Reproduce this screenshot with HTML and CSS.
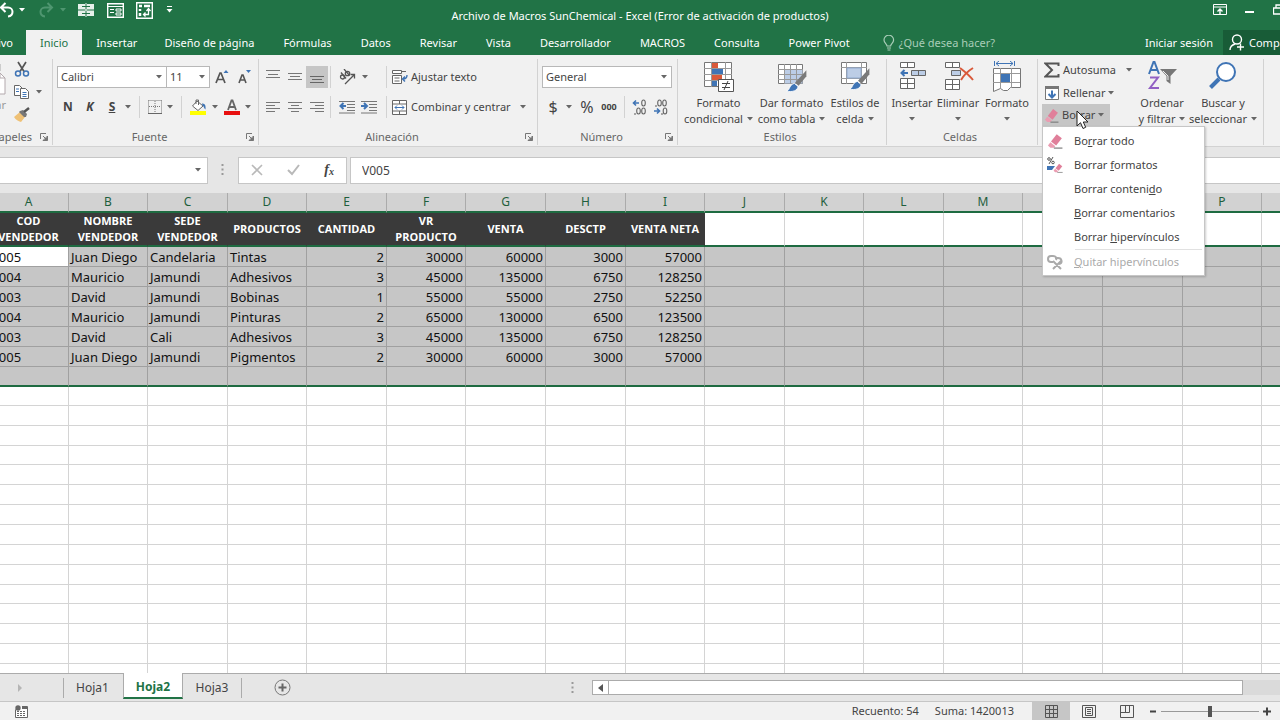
FILE: index.html
```html
<!DOCTYPE html>
<html lang="es">
<head>
<meta charset="utf-8">
<title>Archivo de Macros SunChemical - Excel</title>
<link rel="stylesheet" href="styles.css">
</head>
<body>
<svg class="defs" aria-hidden="true">
  <symbol id="caret" viewBox="0 0 6 4"><path d="M0 0h6L3 3.6z" fill="currentColor"/></symbol>
  <symbol id="launch" viewBox="0 0 8 8"><path d="M.5 6V.5H6M3 3l3 3M7.5 3v4.500H3z" fill="none" stroke="#777"/><path d="M7.500 3.500v4h-4z" fill="#777"/></symbol>
  <symbol id="eraser" viewBox="0 0 14 14"><path d="M8.500 1 13 4.500 8 11l-4.500-3.500z" fill="#e07f9a"/><path d="M3 8.200 7.300 11.500 6 13H3L.8 11z" fill="#eb9db2"/><path d="M6 13.200h7.500" stroke="#777"/></symbol>
  <symbol id="brush" viewBox="0 0 20 20"><path d="M19.500 1v5l-6.500 8-3-2.500z" fill="#7a7a7a"/><path d="m9.500 12 3 2.500c0 3.500-5 5-9.500 4 3-1 2-5.500 6.500-6.500z" fill="#3f74b5" stroke="#fff" stroke-width=".7"/></symbol>
</svg>

<header class="titlebar">
  <div class="quick">
    <button class="ib" aria-label="Deshacer"><svg width="17" height="16" viewBox="0 0 17 16"><path d="M5.500 1 1 5.500 5.500 10M1.500 5.500H8c6 0 6 8.500 0 9" fill="none" stroke="#fff" stroke-width="2"/></svg></button>
    <svg class="caret white"><use href="#caret"/></svg>
    <button class="ib redo" aria-label="Rehacer"><svg width="17" height="16" viewBox="0 0 17 16"><path d="M9.500 1 14 5.500 9.500 10M13.500 5.500H7c-6 0-6 8.500 0 9" fill="none" stroke="#4f9670" stroke-width="2"/></svg></button>
    <svg class="caret dim"><use href="#caret"/></svg>
    <button class="ib q1" aria-label="Dividir"><svg width="16" height="14" viewBox="0 0 16 14"><path d="M0 1h7v5H0zM9 1h7v5H9zM0 8h7v5H0zM9 8h7v5H9z" fill="#e6f0ea"/><path d="M8 0v14M0 7h16" stroke="#e6f0ea"/><path d="M4 3.500h8M4 10.500h8" stroke="#217346"/></svg></button>
    <button class="ib q2" aria-label="Formulario"><svg width="17" height="15" viewBox="0 0 17 15"><path d="M.7.7h15.600v13.600H.7z" fill="none" stroke="#fff" stroke-width="1.400"/><path d="M1 3.500h15M3 6.500h4M3 9.500h4" stroke="#fff"/><path d="M9 6h5v2H9zM9 10h5v2H9z" fill="none" stroke="#fff"/></svg></button>
    <button class="ib q3" aria-label="Tabla dinámica"><svg width="17" height="17" viewBox="0 0 17 17"><path d="M.7.700h15.600v15.600H.7z" fill="none" stroke="#fff" stroke-width="1.400"/><path d="M3 4h3M8 4h6M4 7v2M4 11v3" stroke="#fff" stroke-width="2.500"/><path d="M8 12.500h4.500V7M10.500 9l2-2.500 2 2.500M9.500 10.500l-2 2 2 2" fill="none" stroke="#fff" stroke-width="1.300"/></svg></button>
    <button class="ib q4" aria-label="Personalizar"><svg width="7" height="8" viewBox="0 0 7 8"><path d="M1 .500h5" stroke="#fff"/><path d="M.5 3h6l-3 3.500z" fill="#fff"/></svg></button>
  </div>
  <div class="doc-title">Archivo de Macros SunChemical - Excel (Error de activación de productos)</div>
  <div class="winbtns">
    <button class="ib" aria-label="Opciones de la cinta"><svg width="14" height="12" viewBox="0 0 14 12"><path d="M.5.500h13v10H.5zM.5 3h13" fill="none" stroke="#fff"/><path d="M7 10V5M4.500 7.500 7 5l2.500 2.500" fill="none" stroke="#fff" stroke-width="1.400"/></svg></button>
    <button class="ib" aria-label="Minimizar"><svg width="10" height="12" viewBox="0 0 10 12"><path d="M0 8h9" stroke="#fff" stroke-width="2"/></svg></button>
    <button class="ib" aria-label="Restaurar"><svg width="12" height="12" viewBox="0 0 12 12"><path d="M3 3.500V1h8v6H9M.5 4h8v6h-8z" fill="none" stroke="#fff" stroke-width="1.300"/></svg></button>
  </div>
</header>

<nav class="tabs">
  <button class="tab file">Archivo</button>
  <button class="tab active">Inicio</button>
  <button class="tab">Insertar</button>
  <button class="tab">Diseño de página</button>
  <button class="tab">Fórmulas</button>
  <button class="tab">Datos</button>
  <button class="tab">Revisar</button>
  <button class="tab">Vista</button>
  <button class="tab">Desarrollador</button>
  <button class="tab">MACROS</button>
  <button class="tab">Consulta</button>
  <button class="tab">Power Pivot</button>
  <button class="tab tell"><svg width="12" height="16" viewBox="0 0 12 16"><path d="M4 11c0-2-3-3-3-6a4.800 4.800 0 0 1 9.600 0c0 3-3 4-3 6zM4 13h4M4.500 15h3" fill="none" stroke="#a9cdb8" stroke-width="1.200"/></svg>¿Qué desea hacer?</button>
  <button class="tab signin">Iniciar sesión</button>
  <button class="share"><svg width="16" height="17" viewBox="0 0 16 17"><circle cx="8" cy="5.500" r="4.500" fill="none" stroke="#fff" stroke-width="1.400"/><path d="M1 16c0-3 2-5 5-6M11.500 9.500v7M8 13h7" fill="none" stroke="#fff" stroke-width="1.400"/></svg>Compartir</button>
</nav>

<section class="ribbon">
  <div class="group clip">
    <div class="body clipbody">
      <button class="paste"><svg width="16" height="32" viewBox="0 0 16 32"><path d="M0 1h10v6" fill="none" stroke="#ccc" stroke-width="2"/><path d="M1 9h9l5 5v16H1z" fill="#fff" stroke="#b3a9ad"/><path d="M10 9v5h5" fill="none" stroke="#b3a9ad"/></svg><span>Pegar</span></button>
      <div class="stack">
        <button class="ib" aria-label="Cortar"><svg width="16" height="16" viewBox="0 0 16 16"><path d="m4 1 6 9.500M12 1 6 10.500" stroke="#555" stroke-width="1.700"/><circle cx="4" cy="12.500" r="2.500" fill="none" stroke="#3f74b5" stroke-width="1.500"/><circle cx="12" cy="12.500" r="2.500" fill="none" stroke="#3f74b5" stroke-width="1.500"/></svg></button>
        <button class="ib copy" aria-label="Copiar"><svg width="16" height="16" viewBox="0 0 16 16"><path d="M.5 1.500h5l3 3v7h-8z" fill="#fff" stroke="#666"/><path d="M6.500 4.500h5l3 3v7h-8z" fill="#fff" stroke="#666"/><path d="M2 5h3M2 7.500h3M8.500 8.500h4M8.500 10.500h4M8.500 12.500h4" stroke="#3f74b5"/></svg></button>
        <svg class="caret"><use href="#caret"/></svg>
        <button class="ib" aria-label="Copiar formato"><svg width="17" height="16" viewBox="0 0 17 16"><path d="m0 10 6-5 5 5-4 5c-3-1-5-2-7-5z" fill="#efc176"/><path d="m6 4 3-1 4 4-1 3-2 0-5-5z" fill="#777"/><path d="m10 5 5-4" stroke="#555" stroke-width="2.500"/></svg></button>
      </div>
    </div>
    <div class="label"><span>Portapapeles</span><button class="ib" aria-label="Más"><svg class="launch"><use href="#launch"/></svg></button></div>
  </div>

  <div class="group fuente">
    <div class="body rows">
      <div class="row">
        <div class="combo font"><select aria-label="Fuente"><option>Calibri</option></select><svg class="caret"><use href="#caret"/></svg></div>
        <div class="combo size"><select aria-label="Tamaño"><option>11</option></select><svg class="caret"><use href="#caret"/></svg></div>
        <button class="ib grow" aria-label="Aumentar"><svg width="14" height="16" viewBox="0 0 14 16"><path d="m1 14 4-10h1l4 10M2.500 10.500h6" fill="none" stroke="#555" stroke-width="1.700"/><path d="M8.500 4h5L11 1z" fill="#3f74b5"/></svg></button>
        <button class="ib grow" aria-label="Disminuir"><svg width="14" height="16" viewBox="0 0 14 16"><path d="m1 14 3-8h1l3 8M2 11h5" fill="none" stroke="#555" stroke-width="1.600"/><path d="M8 1h5l-2.500 3z" fill="#3f74b5"/></svg></button>
      </div>
      <div class="row">
        <button class="ib fmt bold">N</button>
        <button class="ib fmt ital">K</button>
        <button class="ib fmt under">S</button>
        <svg class="caret"><use href="#caret"/></svg>
        <i class="sep"></i>
        <button class="ib" aria-label="Bordes"><svg width="14" height="14" viewBox="0 0 14 14"><path d="M.5.500h13M.5.500v13M13.500.500v13M7 1v12M1 6.500h12" fill="none" stroke="#777" stroke-dasharray="1 1"/><path d="M0 13.500h14" stroke="#666"/></svg></button>
        <svg class="caret"><use href="#caret"/></svg>
        <i class="sep"></i>
        <button class="ib" aria-label="Color de relleno"><svg width="17" height="16" viewBox="0 0 17 16"><path d="M0 12h16v4H0z" fill="#ff0"/><path d="m7 2 6 5-5 4.500L2.500 7z" fill="#fff" stroke="#666"/><path d="M6 5V1h2.500v5" fill="none" stroke="#666"/><path d="M12 4.500c3 0 4 2 3.500 6-2-1-1-3-3-4z" fill="#3f74b5"/></svg></button>
        <svg class="caret"><use href="#caret"/></svg>
        <button class="ib" aria-label="Color de fuente"><svg width="16" height="16" viewBox="0 0 16 16"><path d="M0 12h16v4H0z" fill="#e81010"/><path d="m4 11 3.500-9.500h1L12 11M5 8h6" fill="none" stroke="#666" stroke-width="1.800"/></svg></button>
        <svg class="caret"><use href="#caret"/></svg>
      </div>
    </div>
    <div class="label"><span>Fuente</span><button class="ib" aria-label="Más"><svg class="launch"><use href="#launch"/></svg></button></div>
  </div>

  <div class="group alinea">
    <div class="body cols">
      <div class="rows sub">
        <div class="row al">
          <button class="ib" aria-label="Alinear arriba"><svg width="14" height="16" viewBox="0 0 14 16"><path d="M0 1.500h14M2 5.500h10M0 8.500h14" stroke="#777"/></svg></button>
          <button class="ib" aria-label="Alinear en medio"><svg width="14" height="16" viewBox="0 0 14 16"><path d="M0 4.500h14M2 7.500h10M0 10.500h14" stroke="#777"/></svg></button>
          <button class="ib on" aria-label="Alinear abajo"><svg width="14" height="16" viewBox="0 0 14 16"><path d="M0 7.500h14M2 10.500h10M0 13.500h14" stroke="#666"/></svg></button>
        </div>
        <div class="row al">
          <button class="ib" aria-label="Izquierda"><svg width="14" height="12" viewBox="0 0 14 12"><path d="M0 1.500h14M0 4.500h9M0 7.500h14M0 10.500h9" stroke="#777"/></svg></button>
          <button class="ib" aria-label="Centrar"><svg width="14" height="12" viewBox="0 0 14 12"><path d="M0 1.500h14M3 4.500h8M0 7.500h14M3 10.500h8" stroke="#777"/></svg></button>
          <button class="ib" aria-label="Derecha"><svg width="14" height="12" viewBox="0 0 14 12"><path d="M0 1.500h14M5 4.500h9M0 7.500h14M5 10.500h9" stroke="#777"/></svg></button>
        </div>
      </div>
      <div class="rows sub indent">
        <div class="row">
          <button class="ib" aria-label="Orientación"><svg width="17" height="16" viewBox="0 0 17 16"><g fill="none" stroke="#555" stroke-width="1.300"><circle cx="3.500" cy="8" r="2"/><path d="m2 3.500 5 6"/><circle cx="8.500" cy="4.500" r="2.200"/><path d="m5 0 5.500 6.500M6 15l9-9M11.500 5.500h4v4"/></g></svg></button>
          <svg class="caret"><use href="#caret"/></svg>
        </div>
        <div class="row">
          <button class="ib" aria-label="Disminuir sangría"><svg width="16" height="14" viewBox="0 0 16 14"><path d="M0 1.500h16M8 4.500h8M8 7.500h8M8 10.500h8M0 13h16" stroke="#777"/><path d="M7 6H2M4.500 3 1.500 6l3 3" fill="none" stroke="#3f74b5" stroke-width="2"/></svg></button>
          <button class="ib" aria-label="Aumentar sangría"><svg width="16" height="14" viewBox="0 0 16 14"><path d="M0 1.500h16M8 4.500h8M8 7.500h8M8 10.500h8M0 13h16" stroke="#777"/><path d="M0 6h5M3 3l3 3-3 3" fill="none" stroke="#3f74b5" stroke-width="2"/></svg></button>
        </div>
      </div>
      <div class="rows sub wrap">
        <div class="row"><button class="tb"><svg width="16" height="16" viewBox="0 0 16 16"><path d="M.5 1.500h9v3h-9zM.5 6.500h9v8h-9z" fill="#fff" stroke="#666"/><path d="M2.500 9h5M2.500 12h5M10 2.500h4" stroke="#666"/><path d="M15 6c0 3-1 4-4 4M13 7.500 10.500 10l2.500 2.500" fill="none" stroke="#3f74b5" stroke-width="1.400"/></svg>Ajustar texto</button></div>
        <div class="row"><button class="tb"><svg width="16" height="15" viewBox="0 0 16 15"><path d="M.5.500h14v14H.5zM.5 4h14M.5 11h14M7.500.500V4M7.500 11v3.500" fill="#fff" stroke="#666"/><path d="M3 7.500h9M5 5.500l-2 2 2 2M10 5.500l2 2-2 2" fill="none" stroke="#3f74b5"/></svg>Combinar y centrar</button><svg class="caret gap"><use href="#caret"/></svg></div>
      </div>
    </div>
    <div class="label"><span>Alineación</span><button class="ib" aria-label="Más"><svg class="launch"><use href="#launch"/></svg></button></div>
  </div>

  <div class="group numero">
    <div class="body rows">
      <div class="row"><div class="combo num"><select aria-label="Formato de número"><option>General</option></select><svg class="caret"><use href="#caret"/></svg></div></div>
      <div class="row nrow">
        <button class="ib cur">$</button><svg class="caret"><use href="#caret"/></svg>
        <button class="ib pct">%</button><button class="ib mil">000</button><i class="sep"></i>
        <button class="ib dec" aria-label="Aumentar decimales"><svg width="16" height="16" viewBox="0 0 16 16"><path d="M7 4H2M4 1.500 1.500 4 4 6.500" fill="none" stroke="#3f74b5" stroke-width="1.600"/><g fill="none" stroke="#666" stroke-width="1.100"><ellipse cx="11.500" cy="4" rx="1.800" ry="3"/><ellipse cx="6.500" cy="12" rx="1.800" ry="3"/><ellipse cx="11.500" cy="12" rx="1.800" ry="3"/><path d="M3 14v2"/></g></svg></button>
        <button class="ib dec" aria-label="Disminuir decimales"><svg width="16" height="16" viewBox="0 0 16 16"><path d="M1 12h5M4 9.500 6.500 12 4 14.500" fill="none" stroke="#3f74b5" stroke-width="1.600"/><g fill="none" stroke="#666" stroke-width="1.100"><ellipse cx="6.500" cy="4" rx="1.800" ry="3"/><ellipse cx="11.500" cy="4" rx="1.800" ry="3"/><ellipse cx="12" cy="12" rx="1.800" ry="3"/><path d="M3 6v2M9 14v2"/></g></svg></button>
      </div>
    </div>
    <div class="label"><span>Número</span><button class="ib" aria-label="Más"><svg class="launch"><use href="#launch"/></svg></button></div>
  </div>

  <div class="group estilos">
    <div class="body bigs">
      <button class="big"><svg width="32" height="32" viewBox="0 0 32 32"><path d="M1.500 1.500h27v24h-27z" fill="#fff" stroke="#777"/><path d="M1 7.500h28M1 13.500h28M1 19.500h28M8.500 1v25M22.500 1v25" stroke="#999"/><path d="M9 2h6v5H9zM9 14h10v5H9z" fill="#d9593a"/><path d="M9 8h11v5H9zM9 20h5v5H9z" fill="#3f74b5"/><path d="M15.500 18.500h15v12h-15z" fill="#fff" stroke="#555"/><path d="M19 22.500h8M19 26.500h8M25 20l-4 9" stroke="#444"/></svg><span>Formato</span><span>condicional <svg class="caret"><use href="#caret"/></svg></span></button>
      <button class="big"><svg width="32" height="32" viewBox="0 0 32 32"><path d="M2.500 3.500h24v19h-24z" fill="#fff" stroke="#777"/><path d="M8.500 8.500h18v14h-18z" fill="#bccde6"/><path d="M2 8.500h25M2 13.500h25M2 18.500h25M8.500 3v20M14.500 3v20M20.500 3v20" stroke="#999"/><use href="#brush" x="7" y="8" width="24" height="24"/></svg><span>Dar formato</span><span>como tabla <svg class="caret"><use href="#caret"/></svg></span></button>
      <button class="big"><svg width="32" height="32" viewBox="0 0 32 32"><path d="M2.500 1.500h25v21h-25z" fill="#fff" stroke="#777"/><path d="M2 6.500h26M2 17.500h26M7.500 1v22M22.500 1v22" stroke="#999"/><path d="M8 7h14v10H8z" fill="#bccde6" stroke="#8fa9cf"/><use href="#brush" x="7" y="6" width="24" height="24"/></svg><span>Estilos de</span><span>celda <svg class="caret"><use href="#caret"/></svg></span></button>
    </div>
    <div class="label"><span>Estilos</span></div>
  </div>

  <div class="group celdas">
    <div class="body bigs">
      <button class="big"><svg width="32" height="32" viewBox="0 0 32 32"><path d="M4.500 1.500h14v5h-14zM11.500 1.500v5M4.500 17.500h14v10h-14zM4.500 22.500h14M11.500 17.500v10" fill="#fff" stroke="#666"/><path d="M15.500 9.500h14v5h-14zM22.500 9.500v5" fill="#bccde6" stroke="#666"/><path d="M12 12H6M8.500 9l-3 3 3 3" fill="none" stroke="#3f74b5" stroke-width="2"/></svg><span>Insertar</span><svg class="caret"><use href="#caret"/></svg></button>
      <button class="big"><svg width="32" height="32" viewBox="0 0 32 32"><path d="M3.500 1.500h14v5h-14zM10.500 1.500v5M3.500 18.500h14v10h-14zM3.500 23.500h14M10.500 18.500v10" fill="#fff" stroke="#666"/><path d="M9.500 9.500h9v5h-9z" fill="#bccde6" stroke="#666"/><path d="M18 7c4 3 9 7 13 12M31 7c-5 3-9 7-12 12" fill="none" stroke="#d9593a" stroke-width="2"/></svg><span>Eliminar</span><svg class="caret"><use href="#caret"/></svg></button>
      <button class="big"><svg width="32" height="32" viewBox="0 0 32 32"><path d="M3.500 0v5M23.500 0v5M5 2.500h17M8 0 5 2.500 8 5M19 0l3 2.500L19 5" fill="none" stroke="#3f74b5"/><path d="M2.500 7.500h27v19h-10l-3 3h-4l-3-2-7 3z" fill="#fff" stroke="#777"/><path d="M2 12.500h27M2 21.500h27M9.500 7v20M20.500 7v20" stroke="#999"/><path d="M10 13h9v8h-9z" fill="#3f74b5"/></svg><span>Formato</span><svg class="caret"><use href="#caret"/></svg></button>
    </div>
    <div class="label"><span>Celdas</span></div>
  </div>

  <div class="group modificar">
    <div class="body cols">
      <div class="edit">
        <button class="tb wide"><svg width="16" height="16" viewBox="0 0 16 16"><path d="M14.500 4V1.500h-13L8 8l-6.500 6.500h13V12" fill="none" stroke="#555" stroke-width="2"/></svg>Autosuma<svg class="caret"><use href="#caret"/></svg></button>
        <button class="tb"><svg width="16" height="16" viewBox="0 0 16 16"><path d="M1.500 1.500h13v13h-13z" fill="#fff" stroke="#777"/><path d="M1 1h14v3H1z" fill="#777"/><path d="M8 5.500v7M4.500 9 8 12.500 11.500 9" fill="none" stroke="#3f74b5" stroke-width="2"/></svg>Rellenar<svg class="caret"><use href="#caret"/></svg></button>
        <div class="drop">
          <button class="tb open"><svg width="15" height="15"><use href="#eraser"/></svg>Borrar<svg class="caret"><use href="#caret"/></svg></button>
          <svg class="pointer" width="14" height="20" viewBox="0 0 14 20"><path d="M1 1v15l3.500-3.300L7 18.500l2.700-1.200L7.300 12H12z" fill="#fff" stroke="#222"/></svg>
          <div class="menu" role="menu">
            <button role="menuitem"><svg width="16" height="16"><use href="#eraser"/></svg><span>Bo<u>r</u>rar todo</span></button>
            <button role="menuitem"><svg width="16" height="16" viewBox="0 0 16 16"><g fill="none" stroke="#555"><circle cx="2" cy="2" r="1.300"/><circle cx="6" cy="5.500" r="1.300"/><path d="M6 0 2 7"/></g><path d="M0 9h8l-3 4H0z" fill="#3f74b5"/><use href="#eraser" x="6" y="6" width="10" height="10"/></svg><span>Borrar <u>f</u>ormatos</span></button>
            <button role="menuitem"><i></i><span>Borrar conteni<u>d</u>o</span></button>
            <button role="menuitem"><i></i><span><u>B</u>orrar comentarios</span></button>
            <button role="menuitem"><i></i><span>Borrar <u>h</u>ipervínculos</span></button>
            <hr>
            <button role="menuitem" disabled><svg width="16" height="16" viewBox="0 0 16 16"><g fill="none" stroke="#aaa" stroke-width="2"><path d="M6 8H4C0 8 0 2 4 2h2c3 0 4 2 3 4M8 4h3c4 0 5 5 1 6M6 7l8 8M14 7l-8 8"/></g></svg><span><u>Q</u>uitar hipervínculos</span></button>
          </div>
        </div>
      </div>
      <button class="big sort"><svg width="32" height="32" viewBox="0 0 32 32"><path d="m3 13 4.500-12h1L13 13M4.500 9h7" fill="none" stroke="#3f74b5" stroke-width="2"/><path d="M4 16.500h8L4 27h9" fill="none" stroke="#9160c4" stroke-width="2"/><path d="M14 8h17l-6.500 7v8l-4-3v-5z" fill="#777"/><path d="m17 10 5 5v4" fill="none" stroke="#eee"/></svg><span>Ordenar</span><span>y filtrar <svg class="caret"><use href="#caret"/></svg></span></button>
      <button class="big find"><svg width="32" height="32" viewBox="0 0 32 32"><circle cx="19" cy="11" r="9" fill="#fff" stroke="#3f74b5" stroke-width="2"/><path d="M12 18 3.500 26.500" stroke="#3f74b5" stroke-width="4"/></svg><span>Buscar y</span><span>seleccionar <svg class="caret"><use href="#caret"/></svg></span></button>
    </div>
    <div class="label"></div>
  </div>
</section>

<section class="formula">
  <div class="namebox"><input aria-label="Cuadro de nombres"><svg class="caret"><use href="#caret"/></svg></div>
  <svg class="grip" width="3" height="12" viewBox="0 0 3 12"><path d="M.5 1h2M.5 5.500h2M.5 10h2" stroke="#999" stroke-width="2"/></svg>
  <div class="fx">
    <button class="ib" aria-label="Cancelar"><svg width="12" height="12" viewBox="0 0 12 12"><path d="m1 1 10 10M11 1 1 11" stroke="#b9b9b9" stroke-width="1.600"/></svg></button>
    <button class="ib" aria-label="Introducir"><svg width="13" height="12" viewBox="0 0 13 12"><path d="m1 6 4 4 7-9" fill="none" stroke="#b9b9b9" stroke-width="2"/></svg></button>
    <button class="ib fxb">f<small>x</small></button>
  </div>
  <input class="entry" aria-label="Barra de fórmulas" value="V005">
</section>

<main class="sheet"><table id="grid"></table></main>

<footer>
  <div class="sheets">
    <svg class="nav" width="5" height="8" viewBox="0 0 5 8"><path d="M0 0v8l4-4z" fill="#b5b5b5"/></svg>
    <button class="stab first">Hoja1</button>
    <button class="stab cur2">Hoja2</button>
    <button class="stab last">Hoja3</button>
    <button class="ib add" aria-label="Hoja nueva"><svg width="17" height="17" viewBox="0 0 17 17"><circle cx="8.500" cy="8.500" r="7.500" fill="none" stroke="#777"/><path d="M8.500 4.500v8M4.500 8.500h8" stroke="#666" stroke-width="2"/></svg></button>
    <svg class="grip" width="3" height="12" viewBox="0 0 3 12"><path d="M.5 1h2M.5 5.500h2M.5 10h2" stroke="#999" stroke-width="2"/></svg>
    <div class="hscroll"><button class="ib" aria-label="Desplazar"><svg width="5" height="8" viewBox="0 0 5 8"><path d="M5 0v8L0 4z" fill="#555"/></svg></button><div class="thumb"></div></div>
  </div>
  <div class="status">
    <svg class="rec" width="13" height="13" viewBox="0 0 13 13"><path d="M.5 4.500V12.500h12V1.500H7" fill="#fff" stroke="#666"/><path d="M7 2h5v2H7z" fill="#666"/><path d="M2 6.500h9M2 8.500h9M2 10.500h9" stroke="#666" stroke-dasharray="2 1"/><circle cx="3" cy="3" r="2.700" fill="#666"/></svg>
    <span class="count">Recuento: 54</span>
    <span class="sum">Suma: 1420013</span>
    <button class="view sel" aria-label="Normal"><svg width="13" height="13" viewBox="0 0 13 13"><path d="M.5.500h12v12H.5zM.5 4.500h12M.5 8.500h12M4.500.500v12M8.500.500v12" fill="none" stroke="#555"/></svg></button>
    <button class="view" aria-label="Diseño de página"><svg width="14" height="13" viewBox="0 0 14 13"><path d="M.5.500h13v12H.5zM3.500 2.500h7v8h-7zM5 4.500h4M5 6.500h4M5 8.500h4" fill="none" stroke="#555"/></svg></button>
    <button class="view" aria-label="Salto de página"><svg width="14" height="13" viewBox="0 0 14 13"><path d="M.5.500h13v12H.5zM5.500.500v7M9.500.500v7M.5 7.500h9" fill="none" stroke="#555"/></svg></button>
    <button class="ib zoomb" aria-label="Alejar"><svg width="7" height="9" viewBox="0 0 7 9"><path d="M0 4.500h6" stroke="#444" stroke-width="2"/></svg></button>
    <input class="slider" type="range" aria-label="Zoom" min="0" max="100" value="50">
    <button class="ib zoomb" aria-label="Acercar"><svg width="9" height="9" viewBox="0 0 9 9"><path d="M0 4.500h8M4 .500v8" stroke="#444" stroke-width="2"/></svg></button>
  </div>
</footer>
<script src="sheet.js"></script>
</body>
</html>
```
FILE: styles.css
```css
* { box-sizing: border-box; }
body { margin: 0; height: 100vh; display: flex; flex-direction: column; overflow: hidden; background: #e6e6e6; color: #444; font: 11px/16px "Noto Sans", "Open Sans", sans-serif; }
button, input, select { font: inherit; color: inherit; margin: 0; padding: 0; border: 0; background: none; border-radius: 0; }
svg { display: block; flex: none; }
.defs { position: absolute; width: 0; height: 0; }
.caret { width: 6px; height: 4px; color: #666; flex: none; }
.caret.white { color: #fff; }
.caret.dim { color: #4f9670; }
.launch { width: 8px; height: 8px; }
.ib { display: flex; align-items: center; justify-content: center; flex: none; }
.sep { width: 1px; height: 22px; background: #d2d2d2; flex: none; }

.titlebar { display: grid; grid-template-columns: 1fr auto 1fr; align-items: center; height: 30px; background: #217346; color: #fff; flex: none; }
.doc-title { padding-top: 2px; }
.quick { display: flex; align-items: center; height: 20px; align-self: start; }
.quick .ib { height: 16px; }
.quick .redo { margin-left: 13px; }
.quick .dim { margin-left: 5px; }
.quick .white { margin-left: 2px; }
.quick .q1 { margin-left: 12px; }
.quick .q2, .quick .q4 { margin-left: 13px; }
.quick .q3 { margin-left: 12px; }
.winbtns { display: flex; justify-content: flex-end; align-items: center; gap: 18px; height: 20px; align-self: start; margin-right: -5px; }

.tabs { display: flex; align-items: stretch; height: 25px; background: #217346; color: #fff; flex: none; }
.tab { padding: 0 14px 0 15px; white-space: nowrap; }
.file { width: 26px; padding: 0 13px 0 0; display: flex; align-items: center; justify-content: flex-end; flex: none; }
.active { background: #f1f1f1; color: #217346; padding: 0 14px; }
.active + .tab { padding: 0 12px 0 14px; }
.tell { display: flex; align-items: center; gap: 4px; color: #a9cdb8; padding-left: 19px; }
.signin { margin-left: auto; padding: 0 10px; }
.share { display: flex; align-items: center; gap: 4px; background: #185c37; width: 57px; padding-left: 6px; flex: none; overflow: hidden; }

.ribbon { display: flex; height: 92px; background: #f1f1f1; border-bottom: 1px solid #d2d2d2; flex: none; padding-top: 4px; }
.group { display: flex; flex-direction: column; height: 86px; border-right: 1px solid #d2d2d2; flex: none; }
.body { flex: 1; min-height: 0; }
.label { display: flex; align-items: center; height: 16px; padding-right: 4px; color: #666; }
.label span { flex: 1; text-align: center; }
.clip { width: 53px; }
.fuente { width: 206px; }
.alinea { width: 279px; }
.numero { width: 140px; }
.estilos { width: 209px; }
.celdas { width: 151px; }
.modificar { width: 226px; }
.clip .label { justify-content: flex-end; gap: 8px; }
.clip .label span { flex: none; }
.clipbody { display: flex; justify-content: flex-end; }
.paste { display: flex; flex-direction: column; align-items: flex-end; width: 6px; padding-top: 5px; gap: 1px; color: #999; flex: none; }
.stack { display: grid; grid-template-columns: 16px 6px; column-gap: 6px; align-content: start; align-items: center; row-gap: 7px; padding: 2px 10px 0 8px; }
.stack > .ib { grid-column: 1; }
.rows { display: flex; flex-direction: column; gap: 8px; padding-top: 7px; }
.row { display: flex; align-items: center; height: 22px; }
.fuente .row, .numero .row { padding-left: 4px; }
.combo { display: flex; align-items: center; height: 22px; background: #fff; border: 1px solid #b8b8b8; position: relative; }
.combo select { appearance: none; width: 100%; height: 100%; padding: 0 3px; }
.combo .caret { position: absolute; right: 4px; pointer-events: none; }
.font { width: 110px; }
.size { width: 43px; border-left: 0; }
.num { width: 130px; }
.grow { width: 22px; margin-left: 1px; }
.fmt { width: 22px; font-weight: 700; font-size: 12px; }
.ital { font-style: italic; }
.under { text-decoration: underline; }
.fuente .caret { margin-left: 2px; }
.fuente .combo .caret { margin-left: 0; }
.fuente .row > .sep { margin: 0 8px; }
.fuente .sep ~ .ib ~ .caret { margin-left: 5px; }
.fuente .caret + .ib { margin-left: 6px; }
.cols { display: flex; }
.al .ib { width: 22px; height: 22px; }
.al { padding-left: 3px; }
.on { background: #c6c6c6; }
.sub + .sub { margin-left: 1px; }
.sub .row { padding-right: 2px; border-right: 1px solid #d2d2d2; }
.indent .row { width: 55px; padding-left: 7px; gap: 6px; }
.wrap .row { border-right: 0; padding-left: 4px; }
.tb { display: flex; align-items: center; gap: 3px; white-space: nowrap; }
.gap { margin-left: 9px; }
.nrow .cur, .nrow .pct { width: 22px; font-size: 16px; }
.nrow .caret { margin-left: 2px; }
.nrow .pct { margin-left: 4px; }
.nrow .mil { width: 22px; font-size: 9px; font-weight: 700; }
.nrow .sep { margin: 0 4px 0 4px; }
.nrow .dec { width: 21px; }

.bigs { display: flex; padding-left: 4px; }
.big { display: flex; flex-direction: column; align-items: center; padding-top: 2px; white-space: nowrap; flex: none; }
.big > svg:first-child { margin-bottom: 2px; }
.big > .caret { margin-top: 6px; }
.big span { display: flex; align-items: center; gap: 4px; }
.estilos .big { width: 73px; }
.estilos .big:last-child { width: 54px; }
.celdas .bigs { padding-left: 2px; }
.celdas .big { width: 46px; }
.celdas .big:last-child { width: 52px; }
.edit { display: flex; flex-direction: column; width: 99px; padding-left: 4px; }
.edit .tb { height: 22px; padding: 0 2px; color: #444; }
.edit .tb + .tb { height: 23px; }
.edit .wide { width: 92px; justify-content: flex-start; }
.edit .wide .caret { margin-left: auto; }
.drop { position: relative; width: 68px; }
.edit .open { background: #c6c6c6; width: 100%; }
.pointer { position: absolute; left: 34px; top: 6px; z-index: 3; }
.menu { position: absolute; left: 0; top: 22px; z-index: 2; width: 163px; background: #fff; border: 1px solid #c6c6c6; box-shadow: 1px 1px 2px rgba(0,0,0,.2); padding: 2px 0 1px; }
.menu button { display: grid; grid-template-columns: 16px 1fr; column-gap: 11px; align-items: center; width: 100%; height: 24px; padding: 0 4px; text-align: left; white-space: nowrap; }
.menu button:disabled { color: #aaa; }
.menu hr { margin: 0 2px 0 32px; border: 0; border-top: 1px solid #e1e1e1; }
.sort { width: 50px; }
.find { width: 72px; }

.formula { display: flex; align-items: center; height: 46px; flex: none; }
.namebox { display: flex; align-items: center; width: 208px; height: 27px; background: #fff; border: 1px solid #c6c6c6; border-left: 0; padding-right: 6px; }
.namebox input { flex: 1; min-width: 0; }
.grip { margin: 0 14px 0 13px; }
.fx { display: flex; align-items: center; justify-content: space-around; width: 109px; height: 27px; background: #fff; border: 1px solid #c6c6c6; margin-right: 3px; }
.fxb { font: italic 700 14px/18px "Liberation Serif", serif; }
.fxb small { font-size: 10px; padding-top: 4px; }
.entry { flex: 1; height: 27px; background: #fff; border: 1px solid #c6c6c6; border-right: 0; padding-left: 11px; font-size: 12px; }

.sheet { flex: 1; min-height: 0; overflow: hidden; background: #fff; }
#grid { table-layout: fixed; border-collapse: separate; border-spacing: 0; width: 1353px; margin-left: -11px; color: #111; font-size: 13px; line-height: 18px; }
#grid th, #grid td { padding: 0 2px; border: solid #d4d4d4; border-width: 0 1px 1px 0; white-space: nowrap; font-weight: 400; overflow: hidden; }
#grid .w79 { width: 79px; }
#grid .w80 { width: 80px; }
#grid .letters th { height: 20px; background: #d2d2d2; border-right-color: #ababab; border-bottom: 2px solid #1e6b41; color: #1e5f3c; font-size: 12px; line-height: 18px; }
#grid .names td { height: 34px; border-bottom: 2px solid #1e6b41; }
#grid .names .dark { background: #3a3a3a; border-right-color: #3a3a3a; color: #fff; text-align: center; font: 700 11px/16px "Open Sans", sans-serif; white-space: pre-line; padding: 0; }
#grid td { height: 20px; }
#grid .short td { height: 19px; line-height: 17px; }
#grid .picked td { background: #c6c6c6; border-color: #a0a0a0; }
#grid .picked .live { background: #fff; }
#grid .lastpick td { border-bottom: 2px solid #1e6b41; }
#grid .n { text-align: right; }

footer { flex: none; }
.sheets { display: flex; align-items: center; height: 28px; border-top: 1px solid #ababab; background: #e6e6e6; }
.nav { margin-left: 18px; }
.stab { font-size: 12px; height: 20px; padding: 0 13px; flex: none; }
.first { width: 60px; margin-left: 40px; border-left: 1px solid #ababab; padding-left: 11px; }
.cur2 { width: 60px; height: 26px; align-self: flex-start; margin-top: -1px; padding: 4px 0 0; background: #fff; border: solid #ababab; border-width: 0 1px; border-bottom: 2px solid #217346; color: #217346; font-weight: 700; }
.last { width: 59px; border-right: 1px solid #ababab; padding: 0; }
.add { margin-left: 32px; }
.sheets .grip { margin-left: auto; margin-right: 15px; }
.hscroll { display: flex; width: 54%; height: 15px; background: linear-gradient(#dadada, #dadada) right / 40px 100% no-repeat; padding-left: 3px; flex: none; }
.hscroll .ib { width: 16px; height: 15px; background: #fff; border: 1px solid #ababab; border-right: 0; }
.thumb { flex: 1; margin-right: 37px; background: #fff; border: 1px solid #ababab; }
.status { display: flex; align-items: center; height: 19px; background: #f1f1f1; border-top: 1px solid #c6c6c6; padding-right: 4px; }
.rec { margin-left: 15px; }
.count { margin-left: auto; margin-right: 16px; }
.sum { margin-right: 18px; }
.view { display: flex; align-items: center; justify-content: center; width: 38px; height: 18px; flex: none; }
.sel { background: #c6c6c6; }
.zoomb { margin-left: 4px; margin-right: 4px; }
.slider { appearance: none; width: 98px; height: 12px; background: linear-gradient(#999, #999) center / 100% 1px no-repeat; }
.slider::-webkit-slider-thumb { appearance: none; width: 4px; height: 11px; background: #555; }
```
FILE: sheet.js
```js
const widths = [80, 79, 80, 79, 80, 79, 80, 80, 79, 80, 79, 80, 79, 80, 80, 79, 80];
const names = ["COD\nVENDEDOR", "NOMBRE\nVENDEDOR", "SEDE\nVENDEDOR", "PRODUCTOS", "CANTIDAD", "VR\nPRODUCTO", "VENTA", "DESCTP", "VENTA NETA"];
const data = [
  ["V005", "Juan Diego", "Candelaria", "Tintas", 2, 30000, 60000, 3000, 57000],
  ["V004", "Mauricio", "Jamundi", "Adhesivos", 3, 45000, 135000, 6750, 128250],
  ["V003", "David", "Jamundi", "Bobinas", 1, 55000, 55000, 2750, 52250],
  ["V004", "Mauricio", "Jamundi", "Pinturas", 2, 65000, 130000, 6500, 123500],
  ["V003", "David", "Cali", "Adhesivos", 3, 45000, 135000, 6750, 128250],
  ["V005", "Juan Diego", "Jamundi", "Pigmentos", 2, 30000, 60000, 3000, 57000],
  []
];
const table = document.getElementById("grid");

function addRow(className, tag, cellFor) {
  const tr = document.createElement("tr");
  tr.className = className;
  widths.forEach((w, i) => {
    const cell = document.createElement(tag);
    cellFor(cell, i);
    tr.append(cell);
  });
  table.append(tr);
}

addRow("letters", "th", (c, i) => {
  c.className = "w" + widths[i];
  c.textContent = String.fromCharCode(65 + i);
});
addRow("names", "td", (c, i) => {
  if (names[i]) { c.className = "dark"; c.textContent = names[i]; }
});
data.forEach((row, r) => {
  addRow("picked" + (r === 6 ? " lastpick" : ""), "td", (c, i) => {
    if (row[i] !== undefined) c.textContent = row[i];
    if (i > 3) c.className = "n";
    if (r === 0 && i === 0) c.className = "live";
  });
});
for (let r = 0; r < 15; r++) addRow(r === 0 || r === 3 || r === 10 ? "short" : "", "td", () => {});
```
